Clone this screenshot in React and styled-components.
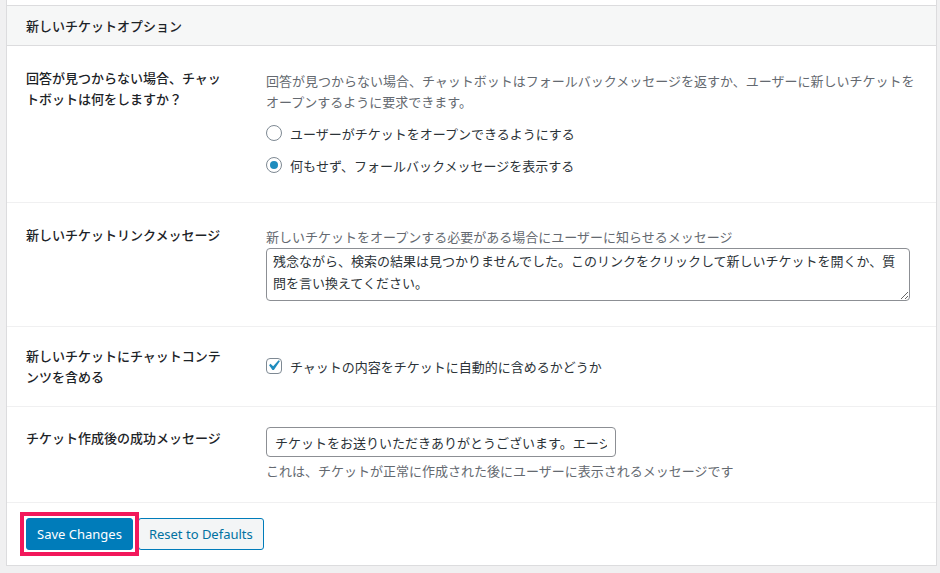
import React from "react";
import styled, { createGlobalStyle } from "styled-components";

const Global = createGlobalStyle`
  html, body { margin: 0; padding: 0; background: #f0f0f1; }
  body {
    font-family: "Noto Sans", "Noto Sans CJK JP", sans-serif;
    font-size: 13px;
    color: #1d2327;
  }
  * { box-sizing: border-box; }
`;

const Wrap = styled.div`
  padding: 0 3px 7px 6px;
  background: #f0f0f1;
`;

const Panel = styled.div`
  background: #fff;
  border: 1px solid #dcdcde;
  border-top: none;
  padding-top: 5px;
`;

const SectionHeader = styled.h2`
  margin: 0;
  height: 41px;
  display: flex;
  align-items: center;
  padding: 0 19px;
  background: #f6f7f7;
  border-top: 1px solid #dcdcde;
  border-bottom: 1px solid #dcdcde;
  font-size: 13px;
  font-weight: 500;
  color: #1d2327;
  font-family: "Noto Sans CJK JP", sans-serif;
`;

const Row = styled.div`
  display: grid;
  grid-template-columns: 240px 1fr;
  align-items: ${(p) => (p.$center ? "center" : "start")};
  padding: ${(p) => p.$pad || "0"};
  padding-left: 19px;
  padding-right: 10px;
  border-bottom: ${(p) => (p.$last ? "none" : "1px solid #f0f0f1")};
`;

const Label = styled.div`
  width: 200px;
  padding-top: ${(p) => p.$pt || 0}px;
  font-family: "Noto Sans CJK JP", sans-serif;
  font-size: 13px;
  font-weight: 500;
  line-height: 21px;
  color: #1d2327;
`;

const Field = styled.div`
  padding-top: ${(p) => p.$pt || 0}px;
  padding-bottom: ${(p) => p.$pb || 0}px;
  display: flex;
  flex-direction: column;
  align-items: flex-start;
`;

const Description = styled.p`
  margin: ${(p) => p.$mt || 0}px 0 0;
  font-family: "Noto Sans CJK JP", sans-serif;
  font-size: 13px;
  line-height: 21px;
  color: #646970;
`;

const OptionList = styled.div`
  margin-top: 5px;
  display: flex;
  flex-direction: column;
`;

const Option = styled.label`
  height: ${(p) => p.$h || 32}px;
  display: flex;
  align-items: center;
  gap: 8px;
  font-family: "Noto Sans CJK JP", sans-serif;
  font-size: 13px;
  color: #2c3338;
`;

const Radio = styled.span`
  width: 16px;
  height: 16px;
  border-radius: 50%;
  border: 1px solid #7e8993;
  display: flex;
  align-items: center;
  justify-content: center;
  background: #fff;
  &::before {
    content: "";
    width: 8px;
    height: 8px;
    border-radius: 50%;
    background: ${(p) => (p.$checked ? "#1e8cbe" : "transparent")};
  }
`;

const Checkbox = styled.span`
  position: relative;
  width: 16px;
  height: 16px;
  border-radius: 4px;
  border: 1px solid #7e8993;
  background: #fff;
  flex: none;
`;

const CheckMark = styled.svg`
  position: absolute;
  left: -4px;
  top: -4px;
  width: 21px;
  height: 21px;
`;

const TextArea = styled.textarea`
  margin-top: 1px;
  width: 644px;
  height: 53px;
  padding: 1px 6px;
  border: 1px solid #8c8f94;
  border-radius: 4px;
  font-family: "Noto Sans CJK JP", sans-serif;
  font-size: 13px;
  line-height: 22px;
  color: #2c3338;
  background: #fff;
  resize: vertical;
  outline: none;
  overflow: hidden;
`;

const TextInput = styled.input`
  width: 350px;
  height: 30px;
  padding: 0 8px;
  border: 1px solid #8c8f94;
  border-radius: 4px;
  font-family: "Noto Sans CJK JP", sans-serif;
  font-size: 13px;
  color: #2c3338;
  background: #fff;
  outline: none;
`;

const Footer = styled.div`
  display: flex;
  align-items: center;
  gap: 5px;
  padding: 15px 19px;
`;

const Button = styled.button`
  position: relative;
  height: 32px;
  padding: 0 10px;
  border-radius: 3px;
  border: 1px solid #007cba;
  font-family: "Noto Sans", sans-serif;
  font-size: 13px;
  cursor: pointer;
  background: ${(p) => (p.$primary ? "#007cba" : "#f3f5f6")};
  color: ${(p) => (p.$primary ? "#fff" : "#0071a1")};
  ${(p) =>
    p.$highlight
      ? `
    z-index: 1;
    &::after {
      content: "";
      position: absolute;
      left: -7px;
      right: -7px;
      top: -7px;
      bottom: -7px;
      border: 4px solid #f2185b;
      pointer-events: none;
    }`
      : ""}
`;

export default function App() {
  return (
    <>
      <Global />
      <Wrap>
        <Panel>
          <SectionHeader>新しいチケットオプション</SectionHeader>

          <Row>
            <Label $pt={21}>回答が見つからない場合、チャットボットは何をしますか？</Label>
            <Field $pt={24} $pb={21}>
              <Description>
                回答が見つからない場合、チャットボットはフォールバックメッセージを返すか、ユーザーに新しいチケットをオープンするように要求できます。
              </Description>
              <OptionList>
                <Option>
                  <Radio />
                  ユーザーがチケットをオープンできるようにする
                </Option>
                <Option>
                  <Radio $checked />
                  何もせず、フォールバックメッセージを表示する
                </Option>
              </OptionList>
            </Field>
          </Row>

          <Row>
            <Label $pt={21}>新しいチケットリンクメッセージ</Label>
            <Field $pt={23} $pb={25}>
              <Description>新しいチケットをオープンする必要がある場合にユーザーに知らせるメッセージ</Description>
              <TextArea
                readOnly
                value="残念ながら、検索の結果は見つかりませんでした。このリンクをクリックして新しいチケットを開くか、質問を言い換えてください。"
              />
            </Field>
          </Row>

          <Row $center $pad="18px 0 19px">
            <Label>新しいチケットにチャットコンテンツを含める</Label>
            <Field>
              <Option $h={21}>
                <Checkbox>
                  <CheckMark viewBox="0 0 20 20">
                    <path
                      d="M14.83 4.89l1.34.94-5.81 8.38H9.02L5.78 9.67l1.34-1.25 2.57 2.4z"
                      fill="#1e8cbe"
                    />
                  </CheckMark>
                </Checkbox>
                チャットの内容をチケットに自動的に含めるかどうか
              </Option>
            </Field>
          </Row>

          <Row>
            <Label $pt={20}>チケット作成後の成功メッセージ</Label>
            <Field $pt={20} $pb={21}>
              <TextInput
                readOnly
                value="チケットをお送りいただきありがとうございます。エージェントが間もなくご連絡いたします。"
              />
              <Description $mt={3}>
                これは、チケットが正常に作成された後にユーザーに表示されるメッセージです
              </Description>
            </Field>
          </Row>

          <Footer>
            <Button $primary $highlight>Save Changes</Button>
            <Button>Reset to Defaults</Button>
          </Footer>
        </Panel>
      </Wrap>
    </>
  );
}
